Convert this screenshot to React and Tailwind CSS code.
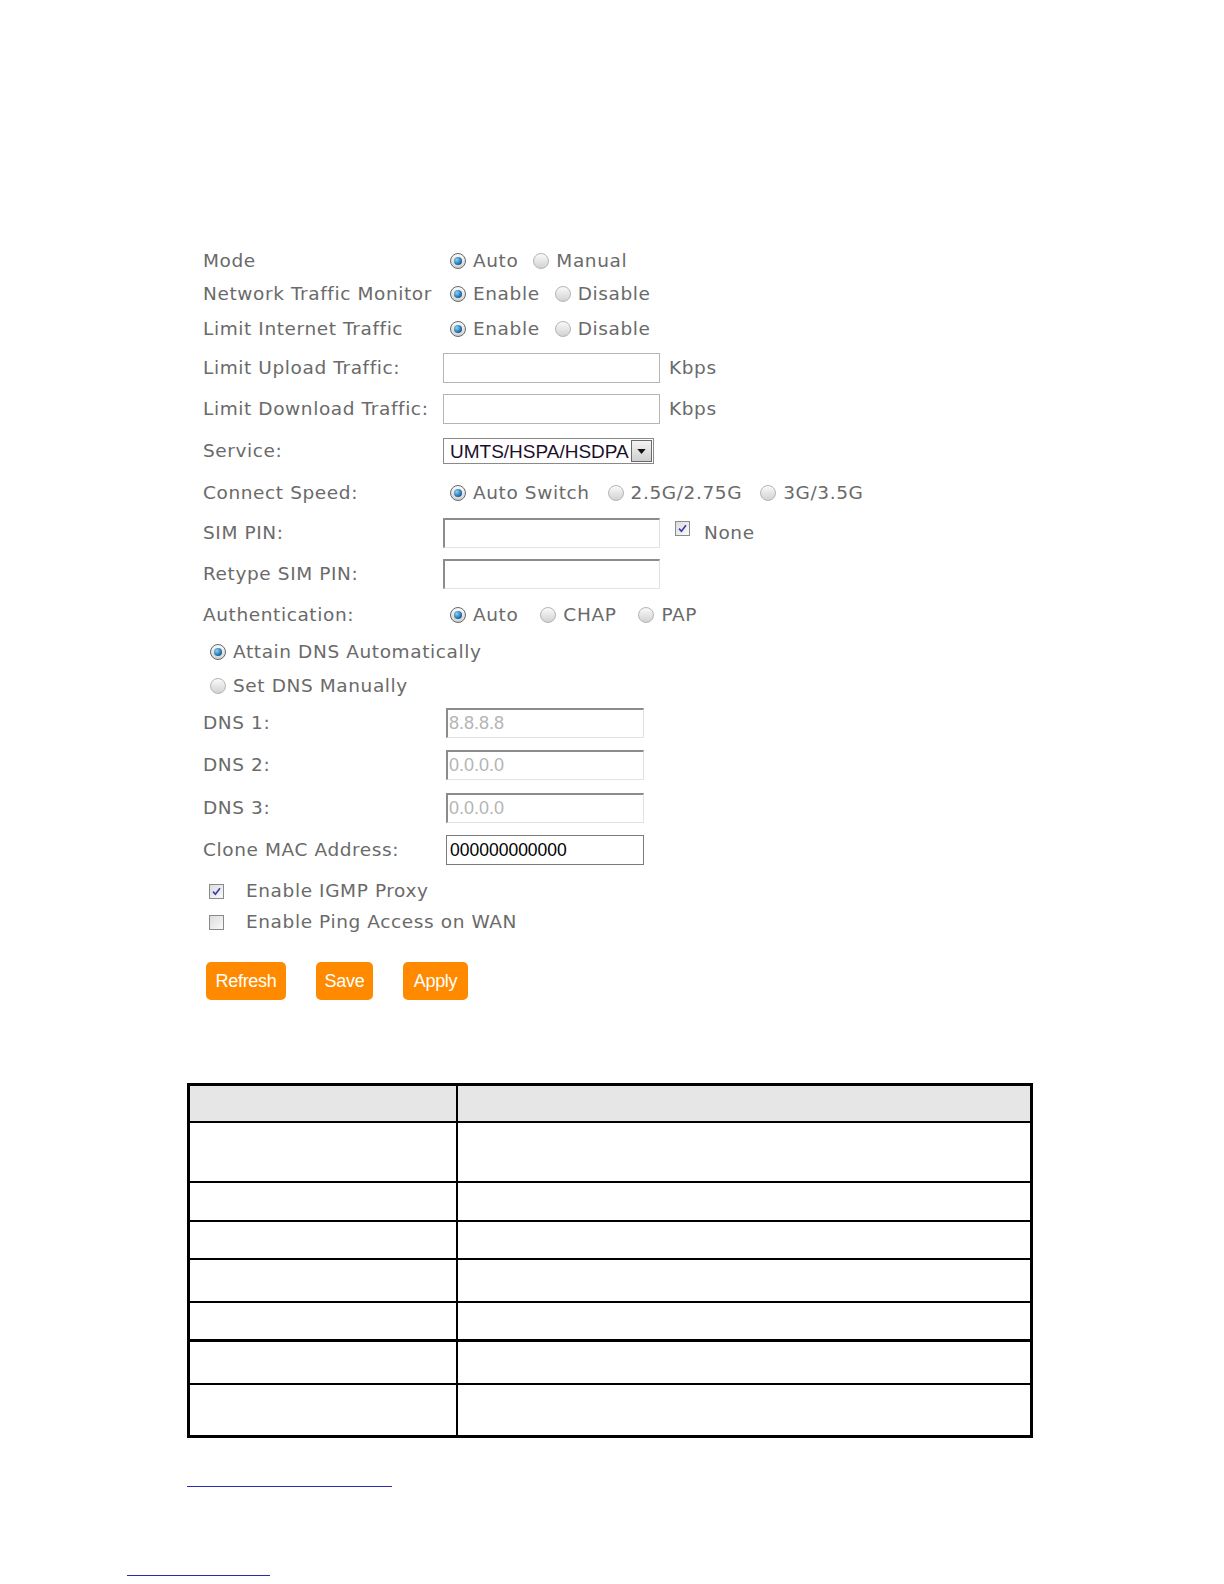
import React from "react";

const Radio = ({ checked }) => (
    <span
        className={`inline-flex h-[16px] w-[16px] shrink-0 items-center justify-center rounded-full border bg-linear-to-b from-[#fafafa] to-[#d2d2d2] ${checked ? "border-[#666]" : "border-[#b4b4b4]"}`}
    >
        {checked && (
            <span className="h-[8px] w-[8px] rounded-full bg-[radial-gradient(circle_at_35%_35%,#8fd0f5,#0a5a9a_75%)]" />
        )}
    </span>
);

const Check = ({ checked }) => (
    <span className="inline-flex h-[15px] w-[15px] shrink-0 items-center justify-center border border-[#8a8a8a] bg-linear-to-br from-[#dcdcdc] to-[#fafafa]">
        {checked && (
            <svg viewBox="0 0 12 12" className="h-[11px] w-[11px]">
                <path d="M2.2 6.2 L4.8 9 L9.8 2.4" fill="none" stroke="#3c3cae" strokeWidth="1.8" />
            </svg>
        )}
    </span>
);

const RadioGroup = ({ items, gap }) => (
    <div className={`ml-[7px] flex items-center ${gap}`}>
        {items.map((it) => (
            <span key={it.label} className="flex items-center gap-[7px]">
                <Radio checked={it.checked} />
                <span>{it.label}</span>
            </span>
        ))}
    </div>
);

const Row = ({ h, label, children }) => (
    <div className={`flex items-center ${h}`}>
        <div className="w-[240px] shrink-0 whitespace-nowrap">{label}</div>
        {children}
    </div>
);

const PlainInput = () => (
    <div className="h-[30px] w-[217px] border border-[#b5b5b5] bg-white" />
);

const InsetInput = ({ w = "w-[217px]", value }) => (
    <div
        className={`flex h-[30px] ${w} items-center border-t-2 border-l-2 border-r border-b border-t-[#8c8c8c] border-l-[#8c8c8c] border-r-[#e2e2e2] border-b-[#e2e2e2] bg-white pl-[1px] font-['Liberation_Sans',sans-serif] text-[18px] tracking-normal text-[#b4b4b4]`}
    >
        {value}
    </div>
);

const tableRows = ["h-[60px]", "h-[39px]", "h-[38px]", "h-[43px]", "h-[39px]", "h-[43px]", "h-[50px]"];

export default function App() {
    return (
        <div className="relative h-[1584px] w-[1224px] overflow-hidden bg-white font-['DejaVu_Sans',sans-serif] text-[18.5px] tracking-[0.6px] text-[#6a6a6a]">
            <div className="pl-[203px] pt-[245px]">
                <Row h="h-[32px]" label="Mode">
                    <RadioGroup
                        gap="gap-[15px]"
                        items={[
                            { label: "Auto", checked: true },
                            { label: "Manual" },
                        ]}
                    />
                </Row>
                <Row h="h-[33px]" label="Network Traffic Monitor">
                    <RadioGroup
                        gap="gap-[15px]"
                        items={[
                            { label: "Enable", checked: true },
                            { label: "Disable" },
                        ]}
                    />
                </Row>
                <Row h="h-[38px]" label="Limit Internet Traffic">
                    <RadioGroup
                        gap="gap-[15px]"
                        items={[
                            { label: "Enable", checked: true },
                            { label: "Disable" },
                        ]}
                    />
                </Row>
                <Row h="h-[40px]" label="Limit Upload Traffic:">
                    <PlainInput />
                    <span className="ml-[9px]">Kbps</span>
                </Row>
                <Row h="h-[42px]" label="Limit Download Traffic:">
                    <PlainInput />
                    <span className="ml-[9px]">Kbps</span>
                </Row>
                <Row h="h-[42px]" label="Service:">
                    <div className="flex h-[26px] w-[211px] items-center border border-[#8a8a8a] bg-white">
                        <span className="flex-1 overflow-hidden whitespace-nowrap pl-[6px] font-['Liberation_Sans',sans-serif] text-[19px] leading-none tracking-normal text-[#1c0f2c]">
                            UMTS/HSPA/HSDPA
                        </span>
                        <span className="mr-[1px] flex h-[22px] w-[21px] shrink-0 items-center justify-center border border-[#6a6a6a] bg-linear-to-b from-[#f4f4f4] to-[#cfcfcf]">
                            <svg viewBox="0 0 10 6" className="h-[5px] w-[9px]">
                                <path d="M0 0 H10 L5 6 Z" fill="#111" />
                            </svg>
                        </span>
                    </div>
                </Row>
                <Row h="h-[41px]" label="Connect Speed:">
                    <RadioGroup
                        gap="gap-[18px]"
                        items={[
                            { label: "Auto Switch", checked: true },
                            { label: "2.5G/2.75G" },
                            { label: "3G/3.5G" },
                        ]}
                    />
                </Row>
                <Row h="h-[40px]" label="SIM PIN:">
                    <InsetInput />
                    <span className="ml-[15px] -mt-[10px]">
                        <Check checked />
                    </span>
                    <span className="ml-[14px]">None</span>
                </Row>
                <Row h="h-[42px]" label="Retype SIM PIN:">
                    <InsetInput />
                </Row>
                <Row h="h-[40px]" label="Authentication:">
                    <RadioGroup
                        gap="gap-[22px]"
                        items={[
                            { label: "Auto", checked: true },
                            { label: "CHAP" },
                            { label: "PAP" },
                        ]}
                    />
                </Row>
                <div className="flex h-[34px] items-center gap-[7px] pl-[7px]">
                    <Radio checked />
                    <span>Attain DNS Automatically</span>
                </div>
                <div className="flex h-[34px] items-center gap-[7px] pl-[7px]">
                    <Radio />
                    <span>Set DNS Manually</span>
                </div>
                <Row h="h-[40px]" label="DNS 1:">
                    <div className="ml-[3px]">
                        <InsetInput w="w-[198px]" value="8.8.8.8" />
                    </div>
                </Row>
                <Row h="h-[43px]" label="DNS 2:">
                    <div className="ml-[3px]">
                        <InsetInput w="w-[198px]" value="0.0.0.0" />
                    </div>
                </Row>
                <Row h="h-[43px]" label="DNS 3:">
                    <div className="ml-[3px]">
                        <InsetInput w="w-[198px]" value="0.0.0.0" />
                    </div>
                </Row>
                <Row h="h-[42px]" label="Clone MAC Address:">
                    <div className="ml-[3px] flex h-[30px] w-[198px] items-center border border-[#7a7a7a] bg-white pl-[3px] font-['Liberation_Sans',sans-serif] text-[17.5px] tracking-normal text-black">
                        000000000000
                    </div>
                </Row>
                <div className="flex h-[40px] items-center pl-[6px]">
                    <Check checked />
                    <span className="ml-[22px]">Enable IGMP Proxy</span>
                </div>
                <div className="flex h-[22px] items-center pl-[6px]">
                    <Check />
                    <span className="ml-[22px]">Enable Ping Access on WAN</span>
                </div>
                <div className="mt-[29px] flex items-center pl-[3px] font-['Liberation_Sans',sans-serif] text-[18px] tracking-[-0.3px] text-white">
                    <button className="h-[38px] w-[80px] rounded-[5px] bg-[#ff8a00]">Refresh</button>
                    <button className="ml-[30px] h-[38px] w-[57px] rounded-[5px] bg-[#ff8a00]">Save</button>
                    <button className="ml-[30px] h-[38px] w-[65px] rounded-[5px] bg-[#ff8a00]">Apply</button>
                </div>
            </div>

            {/* table */}
            <div className="ml-[187px] mt-[83px] w-[846px] border-[3px] border-black">
                <div className="flex h-[37px] border-b-2 border-black bg-[#e6e6e6]">
                    <div className="w-[268px] border-r-2 border-black" />
                    <div className="flex-1" />
                </div>
                {tableRows.map((h, i) => (
                    <div
                        key={i}
                        className={`flex ${h} ${i === tableRows.length - 1 ? "" : i === 4 ? "border-b-[3px] border-black" : "border-b-2 border-black"}`}
                    >
                        <div className="w-[268px] border-r-2 border-black" />
                        <div className="flex-1" />
                    </div>
                ))}
            </div>

            <div className="ml-[187px] mt-[48px] h-[1px] w-[205px] bg-[#2b2bb0]" />
            <div className="ml-[127px] mt-[88px] h-[1px] w-[143px] bg-[#2b2bb0]" />
        </div>
    );
}
